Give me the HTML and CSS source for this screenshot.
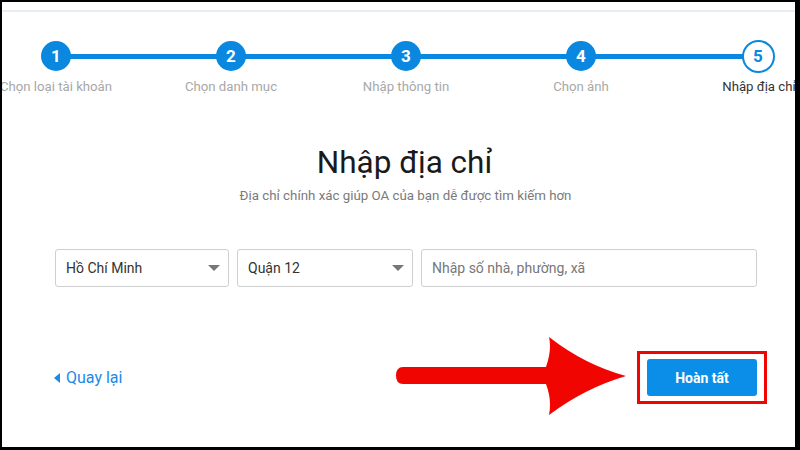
FILE: index.html
```html
<!DOCTYPE html>
<html lang="vi">
<head>
<meta charset="utf-8">
<title>Nhập địa chỉ</title>
<link rel="stylesheet" href="styles.css">
</head>
<body>
<div class="page">
  <div class="topline"></div>
  <ol class="stepper">
    <li class="step done"><span class="dot">1</span><span class="label">Chọn loại tài khoản</span></li>
    <li class="step done"><span class="dot">2</span><span class="label">Chọn danh mục</span></li>
    <li class="step done"><span class="dot">3</span><span class="label">Nhập thông tin</span></li>
    <li class="step done"><span class="dot">4</span><span class="label">Chọn ảnh</span></li>
    <li class="step current"><span class="dot">5</span><span class="label">Nhập địa chỉ</span></li>
  </ol>

  <h1 class="title">Nhập địa chỉ</h1>
  <p class="subtitle">Địa chỉ chính xác giúp OA của bạn dễ được tìm kiếm hơn</p>

  <div class="fields">
    <div class="select city"><span>Hồ Chí Minh</span><i class="caret"></i></div>
    <div class="select district"><span>Quận 12</span><i class="caret"></i></div>
    <div class="input"><span class="placeholder">Nhập số nhà, phường, xã</span></div>
  </div>

  <div class="actions">
    <a class="back"><i class="back-caret"></i>Quay lại</a>
    <div class="highlight"><button class="done-btn">Hoàn tất</button></div>
  </div>

  <svg class="arrow" width="240" height="90" viewBox="390 332 240 90" aria-hidden="true">
    <path d="M 403 367 L 546 367 Q 552 350 549 337 Q 585 365 626 376 Q 585 388 549 415 Q 552 400 546 384 L 403 384 Q 396 384 396 375.5 Q 396 367 403 367 Z" fill="#f00500"/>
  </svg>
</div>
</body>
</html>
```

FILE: styles.css
```css
* { box-sizing: border-box; }
html, body { margin: 0; padding: 0; }
body {
  background: #000;
  width: 800px;
  height: 450px;
  overflow: hidden;
  font-family: Roboto, "Noto Sans", "Liberation Sans", sans-serif;
}
.page {
  position: relative;
  margin: 2px 0 0 2px;
  width: 793px;
  height: 445px;
  background: #fff;
  overflow: hidden;
}
.topline {
  height: 2px;
  margin-top: 8px;
  background: #e8eef4;
}
.stepper {
  list-style: none;
  margin: 29px 0 0 -33.5px;
  padding: 0;
  display: grid;
  grid-template-columns: repeat(5, 175px);
  width: 875px;
}
.step {
  position: relative;
  display: flex;
  flex-direction: column;
  align-items: center;
}
.step:not(:last-child)::after {
  content: "";
  position: absolute;
  top: 12.5px;
  left: 50%;
  width: 100%;
  height: 5px;
  background: #0a88e0;
}
.dot {
  position: relative;
  z-index: 1;
  width: 30px;
  height: 30px;
  border-radius: 50%;
  background: #0a88e0;
  color: #fff;
  font-weight: 700;
  font-size: 17px;
  line-height: 30px;
  text-align: center;
}
.step.current .dot {
  width: 33px;
  height: 33px;
  margin-top: -1.5px;
  background: #fff;
  border: 2px solid #0a88e0;
  color: #0a88e0;
  line-height: 29px;
  margin-left: 4px;
}
.label {
  margin-top: 8px;
  font-size: 13.2px;
  line-height: 16px;
  color: #a8a8a8;
  white-space: nowrap;
}
.step.current .label {
  color: #333;
  margin-top: 6.5px;
  margin-left: 6px;
}
.title {
  margin: 49px 0 0;
  text-align: center;
  font-weight: 400;
  font-size: 31.5px;
  line-height: 38px;
  color: #1a1a1a;
  padding-left: 12px;
}
.subtitle {
  margin: 6px 0 0;
  text-align: center;
  font-size: 13.3px;
  line-height: 16px;
  color: #7a7a7a;
  padding-left: 14px;
}
.fields {
  display: flex;
  gap: 8px;
  margin: 45px 0 0 53px;
  width: 702px;
}
.select, .input {
  height: 38px;
  border: 1px solid #cfcfcf;
  border-radius: 3px;
  display: flex;
  align-items: center;
  padding: 0 10px;
  font-size: 14px;
  color: #333;
}
.select { justify-content: space-between; padding-right: 8px; }
.city { width: 174px; }
.district { width: 176px; }
.input { flex: 1; }
.placeholder { color: #777; }
.caret {
  width: 0;
  height: 0;
  border-left: 6px solid transparent;
  border-right: 6px solid transparent;
  border-top: 6px solid #777;
}
.actions {
  display: flex;
  justify-content: space-between;
  align-items: center;
  margin: 64px 0 0 52px;
  width: 713px;
}
.back {
  display: flex;
  align-items: center;
  gap: 6px;
  color: #1d8ae6;
  font-size: 16px;
  line-height: 18px;
}
.back-caret {
  width: 0;
  height: 0;
  border-top: 5.5px solid transparent;
  border-bottom: 5.5px solid transparent;
  border-right: 6px solid #1d8ae6;
}
.highlight {
  border: 3px solid #f00500;
  padding: 5px 7px 5px 7px;
}
.done-btn {
  display: block;
  width: 110px;
  height: 37px;
  border: 0;
  border-radius: 3px;
  background: #0a8ee8;
  color: #fff;
  font-family: Roboto, "Noto Sans", sans-serif;
  font-weight: 700;
  font-size: 14px;
}
.arrow {
  position: absolute;
  left: 388px;
  top: 330px;
}
```
